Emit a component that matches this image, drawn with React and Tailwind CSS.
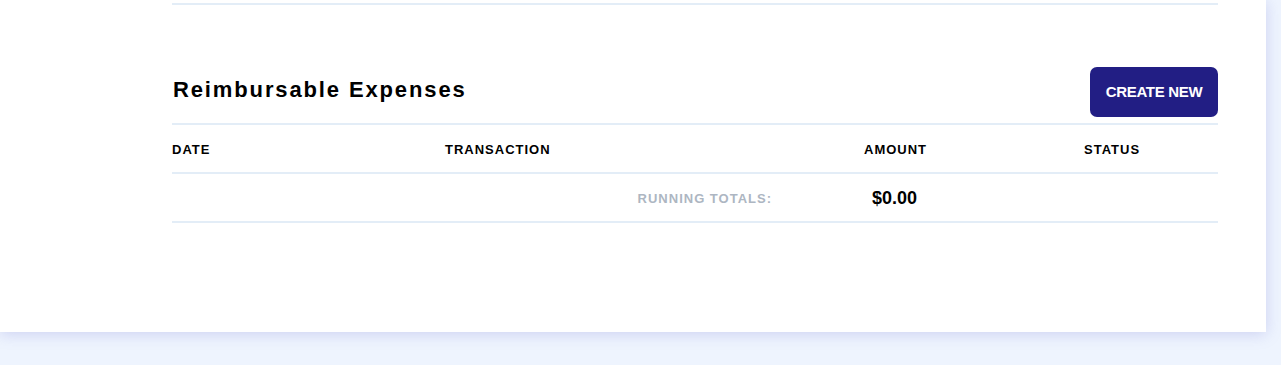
export default function App() {
  const font = { fontFamily: '"Liberation Sans", Arial, sans-serif' }

  return (
    <div className="h-[365px] w-full bg-[#eef4fe] overflow-hidden" style={font}>
      <div className="w-[1266px] h-[332px] bg-white shadow-[0_2px_14px_rgba(120,120,210,0.28)] pl-[172px] pr-[48px] pt-[3px]">
        <div className="border-t-2 border-[#e3edf7]" />

        <div className="mt-[62px] flex items-center justify-between">
          <h2 className="text-[22px] font-bold tracking-[0.085em] text-black pl-px pb-[5px]">
            Reimbursable Expenses
          </h2>
          <button className="h-[50px] w-[128px] rounded-[7px] bg-[#221e84] text-white text-[15px] font-bold tracking-[-0.02em] pt-px">
            CREATE NEW
          </button>
        </div>

        <div className="mt-[6px] border-t-2 border-[#e3edf7]" />
        <div className="grid grid-cols-[273px_419px_220px_1fr] h-[47px] items-center text-[13px] font-bold tracking-[1px] text-black pt-[2px]">
          <div>DATE</div>
          <div>TRANSACTION</div>
          <div>AMOUNT</div>
          <div>STATUS</div>
        </div>

        <div className="border-t-2 border-[#e3edf7]" />
        <div className="grid grid-cols-[273px_419px_220px_1fr] h-[47px] items-center">
          <div />
          <div className="text-right pr-[92px] text-[13px] font-bold tracking-[1px] text-[#adb6c2] pt-[2px]">
            RUNNING TOTALS:
          </div>
          <div className="pl-[8px] text-[18px] font-bold text-black pt-px">$0.00</div>
          <div />
        </div>
        <div className="border-t-2 border-[#e3edf7]" />
      </div>
    </div>
  )
}
